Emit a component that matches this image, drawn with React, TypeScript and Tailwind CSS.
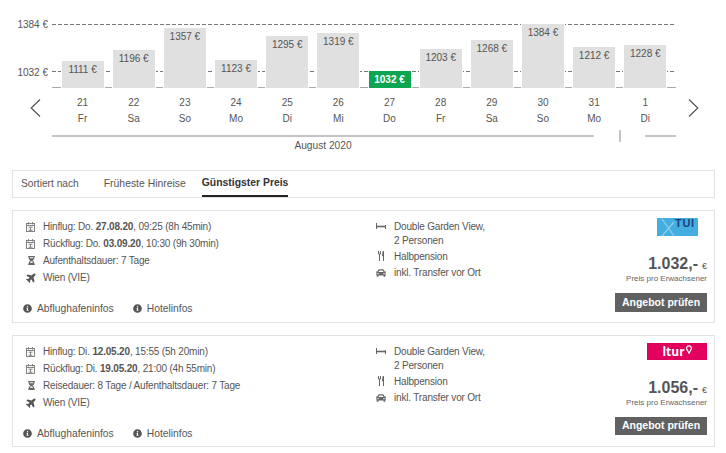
import { FaCar, FaHourglassHalf, FaInfoCircle, FaPlane } from 'react-icons/fa'

const bars = [
  { price: 1111, top: 61, day: '21', name: 'Fr' },
  { price: 1196, top: 50, day: '22', name: 'Sa' },
  { price: 1357, top: 28, day: '23', name: 'So' },
  { price: 1123, top: 60, day: '24', name: 'Mo' },
  { price: 1295, top: 36, day: '25', name: 'Di' },
  { price: 1319, top: 33, day: '26', name: 'Mi' },
  { price: 1032, top: 71, day: '27', name: 'Do', best: true },
  { price: 1203, top: 49, day: '28', name: 'Fr' },
  { price: 1268, top: 40, day: '29', name: 'Sa' },
  { price: 1384, top: 24, day: '30', name: 'So' },
  { price: 1212, top: 47, day: '31', name: 'Mo' },
  { price: 1228, top: 45, day: '1', name: 'Di' },
]

function CalendarIcon() {
  return (
    <svg width="9" height="10" viewBox="0 0 9 10" className="shrink-0" fill="none" stroke="#777" strokeWidth="0.9">
      <rect x="0.5" y="1.5" width="8" height="8" />
      <path d="M0.5 3.5H8.5M2.5 0V2.5M6.5 0V2.5M2.5 5.2H6.5M4.5 5.2V8.5M2.5 8.2H6.5" />
    </svg>
  )
}

function BedIcon() {
  return (
    <svg width="10" height="6" viewBox="0 0 10 6" fill="none" stroke="#666">
      <path d="M0.5 0V6M9.5 2V6" strokeWidth="1" />
      <path d="M0.5 3.5H9.5" strokeWidth="1.6" />
    </svg>
  )
}

function CutleryIcon() {
  return (
    <svg width="7" height="10" viewBox="0 0 7 10" fill="none" stroke="#666" className="ml-[2px]">
      <path d="M0.5 0V3M2.5 0V3M0.5 3H2.5M1.5 3V10" strokeWidth="1" />
      <path d="M5.5 0C4.5 1 4.5 4 4.5 5H5.5M5.5 0V10" strokeWidth="1" />
    </svg>
  )
}

function Row({ icon, children, className = '' }: { icon: React.ReactNode; children: React.ReactNode; className?: string }) {
  return (
    <div className={`flex items-center ${className}`}>
      <span className="flex w-[17px] shrink-0 justify-start">{icon}</span>
      <span>{children}</span>
    </div>
  )
}

function TuiLogo() {
  return (
    <div className="relative h-[18px] w-[41px] bg-[#45aee0]">
      <svg width="41" height="18" viewBox="0 0 41 18" className="absolute inset-0">
        <path d="M5 1L17 18M17 4L5 18" stroke="#8ccdec" strokeWidth="1.3" fill="none" />
      </svg>
      <span className="absolute left-[18px] top-0 text-[11px] leading-[11px] font-bold tracking-[0.7px] text-[#1c3f7c]">TUI</span>
    </div>
  )
}

function LturLogo() {
  return (
    <div className="flex h-[17px] w-[60px] items-center justify-center bg-[#e2005f]">
      <span className="font-['Open_Sans',sans-serif] text-[12px] leading-[17px] font-bold text-white">ltur</span>
      <svg width="6" height="9" viewBox="0 0 6 9" className="mb-[5px] ml-[1px]" fill="none" stroke="#fff" strokeWidth="1.2">
        <path d="M3 8.2L0.9 4.4A2.4 2.4 0 1 1 5.1 4.4Z" />
      </svg>
    </div>
  )
}

type Offer = {
  logo: React.ReactNode
  logoPad: string
  out: [string, string, string]
  back: [string, string, string]
  stay: string
  price: string
  height: string
  buttonHeight: string
}

function OfferCard({ offer }: { offer: Offer }) {
  return (
    <div className={`mx-3 flex w-[703px] border border-[#e2e2e2] text-[10px] tracking-[-0.18px] text-[#555] ${offer.height}`}>
      <div className="flex w-[363px] shrink-0 flex-col pl-[13px]">
        <div className="mt-[7px]">
          <Row className="h-[17px]" icon={<CalendarIcon />}>Hinflug: {offer.out[0]} <b className="font-bold">{offer.out[1]}</b>, {offer.out[2]}</Row>
          <Row className="h-[17px]" icon={<CalendarIcon />}>Rückflug: {offer.back[0]} <b className="font-bold">{offer.back[1]}</b>, {offer.back[2]}</Row>
          <Row className="h-[17px]" icon={<FaHourglassHalf size={9} color="#666" className="ml-[1px]" />}>{offer.stay}</Row>
          <Row className="h-[17px]" icon={<FaPlane size={11} color="#555" className="-rotate-45" />}>Wien (VIE)</Row>
        </div>
        <div className="mt-[15px] flex items-center text-[10.3px] tracking-normal">
          <FaInfoCircle size={9} color="#555" className="-ml-[3px] mr-[5px]" />
          <span>Abflughafeninfos</span>
          <FaInfoCircle size={9} color="#555" className="ml-[19px] mr-[5px]" />
          <span>Hotelinfos</span>
        </div>
      </div>
      <div className="w-[240px] pt-[7px]">
        <Row className="h-4" icon={<BedIcon />}>
          <span className="ml-[1px]">Double Garden View,</span>
        </Row>
        <div className="flex h-[13px] items-center pl-[18px]">2 Personen</div>
        <Row className="mt-[1px] h-4" icon={<CutleryIcon />}>
          <span className="ml-[1px]">Halbpension</span>
        </Row>
        <Row className="h-[17px]" icon={<FaCar size={10} color="#666" />}>
          <span className="ml-[1px]">inkl. Transfer vor Ort</span>
        </Row>
      </div>
      <div className="flex flex-1 flex-col items-end pr-[7px] tracking-normal">
        <div className={offer.logoPad}>{offer.logo}</div>
        <div className="mt-[18px] flex h-[20px] items-baseline text-[#555]">
          <span className="text-[16px] leading-[20px] font-bold">{offer.price}</span>
          <span className="ml-[4px] text-[9px]">€</span>
        </div>
        <div className="text-[8px] leading-[10px] text-[#666]">Preis pro Erwachsener</div>
        <button className={`mt-[9px] w-[92px] bg-[#616161] text-[10.5px] font-bold text-white ${offer.buttonHeight}`}>
          Angebot prüfen
        </button>
      </div>
    </div>
  )
}

export default function App() {
  const offers: Offer[] = [
    {
      logo: <TuiLogo />,
      logoPad: 'mt-[7px] mr-[9px]',
      out: ['Do.', '27.08.20', '09:25 (8h 45min)'],
      back: ['Do.', '03.09.20', '10:30 (9h 30min)'],
      stay: 'Aufenthaltsdauer: 7 Tage',
      price: '1.032,-',
      height: 'h-[113px]',
      buttonHeight: 'h-[19px]',
    },
    {
      logo: <LturLogo />,
      logoPad: 'mt-[7px]',
      out: ['Di.', '12.05.20', '15:55 (5h 20min)'],
      back: ['Di.', '19.05.20', '21:00 (4h 55min)'],
      stay: 'Reisedauer: 8 Tage / Aufenthaltsdauer: 7 Tage',
      price: '1.056,-',
      height: 'h-[112px]',
      buttonHeight: 'h-[18px]',
    },
  ]

  return (
    <div className="h-[453px] w-[726px] overflow-hidden bg-white font-['Liberation_Sans',sans-serif] text-[#555]">
      {/* price chart */}
      <div className="pt-[24px] pl-[52px]">
        <div className="relative h-[64px] w-[624px] text-[10px]">
          <span className="absolute top-[-7px] right-[628px] leading-4 whitespace-nowrap">1384 €</span>
          <span className="absolute top-[41px] right-[628px] leading-4 whitespace-nowrap">1032 €</span>
          <div className="absolute top-0 right-0 left-0 h-px bg-[repeating-linear-gradient(to_right,#777_0,#777_4px,transparent_4px,transparent_6px)]" />
          <div className="absolute top-[47px] right-0 left-0 h-px bg-[repeating-linear-gradient(to_right,#777_0,#777_4px,transparent_4px,transparent_6px)]" />
          <div className="absolute top-[63px] right-0 left-0 h-px bg-[#aaa]" />
          <div className="relative flex h-full items-end px-[5px]">
            {bars.map((b) => (
              <div key={b.day} className="flex w-[51.17px] justify-center">
                <div
                  className={`w-[42px] pt-[2px] text-center leading-[13px] ring-1 ring-white ${b.best ? 'bg-[#0ca551] font-bold text-white' : 'bg-[#e0e0e0] text-[#555]'}`}
                  style={{ height: 88 - b.top }}
                >
                  {b.price} €
                </div>
              </div>
            ))}
          </div>
        </div>
      </div>

      {/* day row with arrows */}
      <div className="mt-px flex h-[37px] items-center">
        <div className="flex w-[52px] justify-end pr-[11px]">
          <svg width="11" height="18" viewBox="0 0 11 18" fill="none" stroke="#555" strokeWidth="1.2" className="mt-[1px]"><path d="M10 0.5L1.2 9L10 17.5" /></svg>
        </div>
        <div className="mt-[6px] flex w-[624px] px-[5px] text-[10px]">
          {bars.map((b) => (
            <div key={b.day} className="w-[51.17px] text-center leading-4">
              <div>{b.day}</div>
              <div>{b.name}</div>
            </div>
          ))}
        </div>
        <div className="flex flex-1 pl-[12px]">
          <svg width="11" height="18" viewBox="0 0 11 18" fill="none" stroke="#555" strokeWidth="1.2" className="mt-[1px]"><path d="M1 0.5L9.8 9L1 17.5" /></svg>
        </div>
      </div>

      {/* month timeline */}
      <div className="ml-[52px] flex h-[44px] w-[624px] items-start pt-[9px] text-[10.2px]">
        <div className="w-[542px] shrink-0">
          <div className="h-[2px] bg-[#c4c4c4]" />
          <div className="mt-px text-center leading-4">August 2020</div>
        </div>
        <div className="ml-[25px] -mt-[5px] h-[12px] w-[2px] bg-[#c4c4c4]" />
        <div className="ml-[24px] h-[2px] flex-1 bg-[#c4c4c4]" />
      </div>

      {/* sort tabs */}
      <div className="mx-3 flex h-[28px] w-[703px] items-stretch border border-[#e2e2e2] pl-[8px] text-[10.4px]">
        <div className="flex items-center text-[10.2px]">Sortiert nach</div>
        <div className="ml-[25px] flex items-center">Früheste Hinreise</div>
        <div className="ml-[16px] flex items-center border-b-2 border-[#222] font-bold text-[#333]">Günstigster Preis</div>
      </div>

      <div className="mt-[12px]">
        <OfferCard offer={offers[0]} />
      </div>
      <div className="mt-[12px]">
        <OfferCard offer={offers[1]} />
      </div>
    </div>
  )
}
